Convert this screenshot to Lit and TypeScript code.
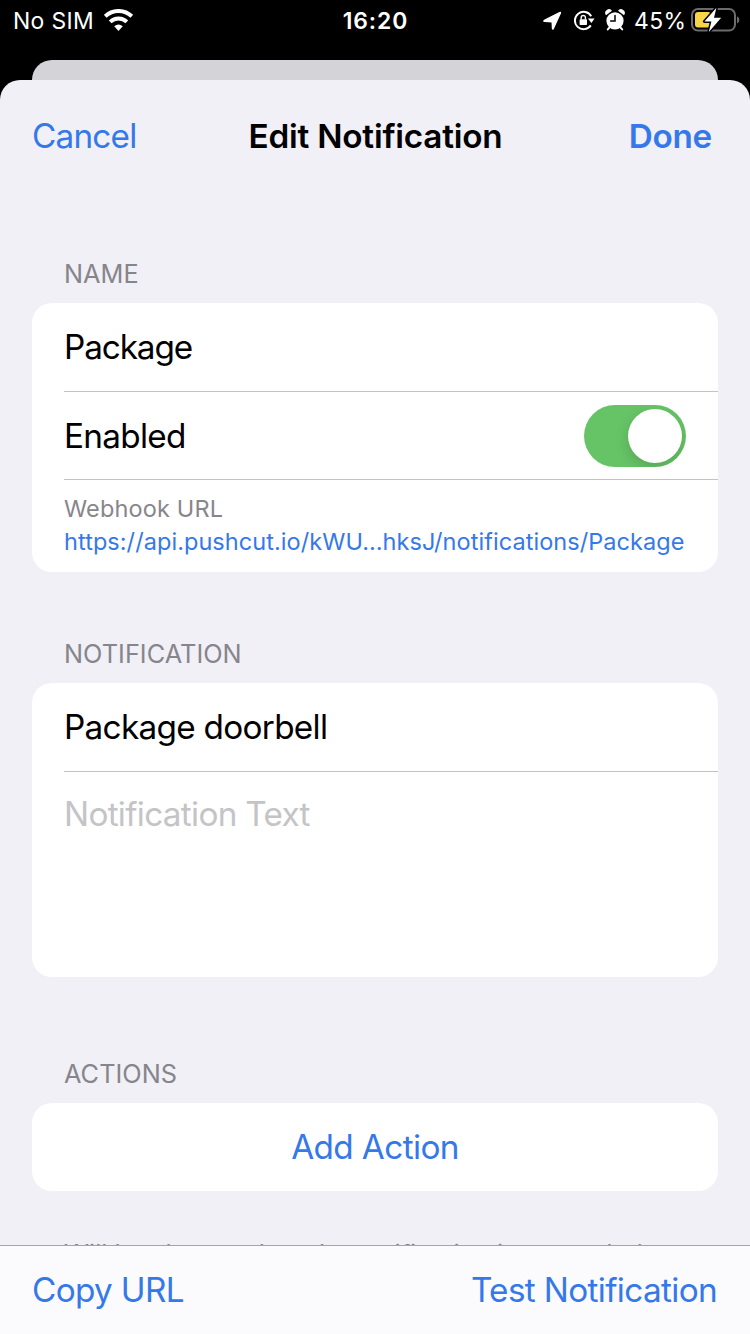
import { LitElement, html, css } from "lit";
import { customElement } from "lit/decorators.js";

@customElement("status-bar")
class StatusBar extends LitElement {
  static styles = css`
    :host { display: flex; height: 40px; align-items: center; color: #fff;
      font: 400 22.9px/40px Inter, "Liberation Sans", sans-serif; }
    svg { display: block; flex: none; }
    .side { display: flex; align-items: center; width: 300px; height: 40px; }
    .left { padding-left: 13px; box-sizing: border-box; }
    .carrier, .time, .pct { padding-top: 2px; }
    .carrier { width: 91px; letter-spacing: 0.35px; white-space: nowrap; }
    .time { width: 150px; text-align: center; font-weight: 600; letter-spacing: 0.9px; text-indent: 1px; }
    .right { padding-left: 92px; box-sizing: border-box; }
    .lock { margin-left: 11px; }
    .alarm { margin-left: 9px; }
    .arrow { margin-top: 1px; }
    .pct { margin-left: 9px; width: 57px; letter-spacing: 0.4px; }
  `;
  render() {
    return html`
      <div class="side left">
        <span class="carrier">No SIM</span>
        <svg width="30" height="22" viewBox="0 0 30 22">
          <g fill="none" stroke="#fff" stroke-width="4">
            <path d="M1.2 7.3A19.3 19.3 0 0 1 27.8 7.3"></path>
            <path d="M6.2 12.9A12 12 0 0 1 22.8 12.9"></path>
          </g>
          <path fill="#fff" d="M14.5 22L10.2 17.3Q14.5 13.6 18.8 17.3Z"></path>
        </svg>
      </div>
      <span class="time">16:20</span>
      <div class="side right">
        <svg class="arrow" width="20" height="20" viewBox="0 0 20 20"><path fill="#fff" stroke="#fff" stroke-width="1.4" stroke-linejoin="round" d="M18.3 2.2L11.2 17.6Q10.7 18.6 10.5 17.4L10.2 10.8L2.6 10.4Q1.2 10.1 2.4 9.4L17.2 1.8Q18.8 1 18.3 2.2Z"></path></svg>
        <svg class="lock" width="23" height="22" viewBox="0 0 23 22">
          <path fill="none" stroke="#fff" stroke-width="1.9" d="M18.2 7.2A8.7 8.7 0 1 0 17.8 16.4"></path>
          <path fill="#fff" d="M14.9 9.6H21.6L18.4 14Z"></path>
          <rect x="6.6" y="10.2" width="7.4" height="5.8" rx=".8" fill="#fff"></rect>
          <path fill="none" stroke="#fff" stroke-width="1.4" d="M8.2 10.3V8.6a2.1 2.1 0 0 1 4.2 0V10.3"></path>
        </svg>
        <svg class="alarm" width="20" height="22" viewBox="0 0 20 22">
          <circle cx="10" cy="11.8" r="8.6" fill="#fff"></circle>
          <path stroke="#fff" stroke-width="2" stroke-linecap="round" d="M4.6 18.4L2.8 20.4M15.4 18.4l1.8 2"></path>
          <path fill="#fff" d="M1 6.2A3.7 3.7 0 0 1 7 1.8ZM19 6.2A3.7 3.7 0 0 0 13 1.8Z"></path>
          <path fill="none" stroke="#000" stroke-width="1.5" stroke-linecap="round" d="M10 6.4V12H5.6"></path>
        </svg>
        <span class="pct">45%</span>
        <svg width="49" height="26" viewBox="0 0 49 26">
          <rect x="1" y="2" width="43" height="21.6" rx="6" fill="none" stroke="#6b6b6b" stroke-width="2"></rect>
          <path fill="#6b6b6b" d="M46 9.2Q48.4 10.2 48.4 12.9T46 16.6Z"></path>
          <rect x="4" y="5" width="16" height="15.6" rx="3" fill="#f9d447"></rect>
          <path fill="#fff" stroke="#000" stroke-width="3" stroke-linejoin="round" paint-order="stroke" d="M25.4 .8L13.4 14.4H20.4L17.8 25L30.2 10.8H23Z"></path>
        </svg>
      </div>`;
  }
}

@customElement("app-root")
class AppRoot extends LitElement {
  static styles = css`
    :host { display: flex; flex-direction: column; height: 1334px; width: 750px; background: #000; overflow: hidden;
      font: 400 33.3px/40px Inter, "Liberation Sans", sans-serif; color: #000; white-space: nowrap; }
    .behind { margin: 20px 32px 0; height: 20px; flex: none; background: #d4d3d8; border-radius: 20px 20px 0 0; }
    .sheet { flex: 1; min-height: 0; display: flex; flex-direction: column; background: #f1f0f6; border-radius: 20px 20px 0 0; overflow: hidden; }
    .nav { display: grid; grid-template-columns: 1fr auto 1fr; height: 112px; flex: none; align-items: center; padding: 0 32px; }
    .blue { color: #3578ea; }
    .title, .done { font-weight: 600; }
    .title { letter-spacing: -0.22px; text-indent: 1px; }
    .cancel { letter-spacing: -0.8px; }
    .done { letter-spacing: -0.3px; justify-self: end; margin-right: 6px; }
    .content { flex: 1; min-height: 0; overflow: hidden; padding: 0 32px; }
    .label { font-size: 25.3px; line-height: 32px; color: #86858b; padding-left: 32px; letter-spacing: 0.03px; }
    .l1 { margin-top: 66px; }
    .l2 { margin-top: 66px; }
    .l3 { margin-top: 81px; }
    .card { margin-top: 13px; background: #fff; border-radius: 20px; overflow: hidden; }
    .row { display: flex; align-items: center; height: 88px; box-sizing: border-box; margin-left: 32px; padding-right: 32px; justify-content: space-between; letter-spacing: -0.7px; }
    .line { border-bottom: 1px solid #c3c3c6; }
    .line.first { height: 89px; }
    .name { letter-spacing: -1.1px; }
    .row.area { height: 205px; align-items: flex-start; padding-top: 22px; color: #c4c4c6; }
    .row.url { height: 92px; flex-direction: column; align-items: flex-start; justify-content: flex-start; padding-top: 12px; font-size: 23.5px; line-height: 33px; letter-spacing: 0.06px; }
    .gray { color: #87868b; letter-spacing: 0.15px; }
    .toggle { width: 102px; height: 62px; border-radius: 31px; background: #66c466; display: flex; align-items: center; justify-content: flex-end; padding-right: 4px; box-sizing: border-box; overflow: hidden; }
    .knob { width: 54px; height: 54px; border-radius: 50%; background: #fff; box-shadow: 0 5px 14px rgba(0,0,0,.15); }
    .row.add { margin-left: 0; padding: 0; justify-content: center; letter-spacing: -0.6px; }
    .foot { margin-top: 47px; padding-left: 32px; font-size: 25.3px; line-height: 32px; color: #86858b; letter-spacing: 0.04px; }
    .bar { height: 88px; flex: none; border-top: 1px solid #a5a5a9; background: #fbfbfd; display: flex; align-items: center; justify-content: space-between; padding: 0 33px 0 32px; }
    .bar span { letter-spacing: -0.65px; }
  `;
  render() {
    return html`
      <status-bar></status-bar>
      <div class="behind"></div>
      <div class="sheet">
        <div class="nav"><span class="blue cancel">Cancel</span><span class="title">Edit Notification</span><span class="blue done">Done</span></div>
        <div class="content">
          <div class="label l1">NAME</div>
          <div class="card">
            <div class="row line first name">Package</div>
            <div class="row line">Enabled<div class="toggle"><div class="knob"></div></div></div>
            <div class="row url"><span class="gray">Webhook URL</span><span class="blue">https://api.pushcut.io/kWU…hksJ/notifications/Package</span></div>
          </div>
          <div class="label l2">NOTIFICATION</div>
          <div class="card">
            <div class="row line first">Package doorbell</div>
            <div class="row area">Notification Text</div>
          </div>
          <div class="label l3">ACTIONS</div>
          <div class="card"><div class="row add blue">Add Action</div></div>
          <div class="foot">Will be shown when the notification is expanded.</div>
        </div>
        <div class="bar blue"><span>Copy URL</span><span>Test Notification</span></div>
      </div>`;
  }
}
